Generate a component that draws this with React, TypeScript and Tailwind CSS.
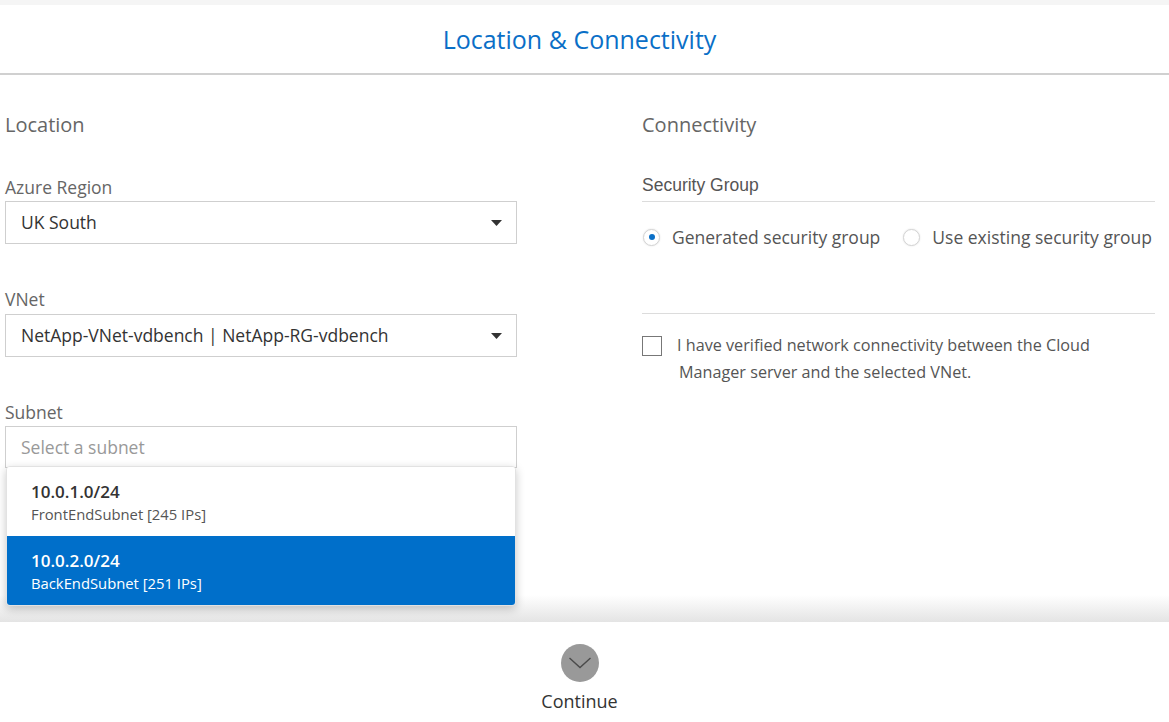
import React from 'react'

const SUBNETS = [
  { cidr: '10.0.1.0/24', name: 'FrontEndSubnet [245 IPs]', active: false },
  { cidr: '10.0.2.0/24', name: 'BackEndSubnet [251 IPs]', active: true },
]

function Caret() {
  return (
    <svg width="11" height="6" viewBox="0 0 11 6" className="shrink-0">
      <path d="M0 0 L11 0 L5.5 6 Z" fill="#333" />
    </svg>
  )
}

function SelectBox({ value }: { value: string }) {
  return (
    <div className="h-[43px] border border-[#cfcfcf] bg-white flex items-center justify-between pl-[15px] pr-[14px]">
      <span className="text-[17.5px] text-[#333]">{value}</span>
      <Caret />
    </div>
  )
}

function Radio({ checked, label }: { checked: boolean; label: string }) {
  return (
    <label className="flex items-center gap-[12px] whitespace-nowrap">
      <span className="w-[17px] h-[17px] rounded-full border border-[#d4d4d4] bg-white shadow-[0_0_2px_rgba(0,0,0,0.12)] flex items-center justify-center shrink-0">
        {checked && <span className="w-[6px] h-[6px] rounded-full bg-[#0a6fc7]" />}
      </span>
      <span className="text-[17.5px] text-[#555]">{label}</span>
    </label>
  )
}

export default function App() {
  return (
    <div className="w-[1169px] h-[722px] bg-white flex flex-col overflow-hidden" style={{ fontFamily: '"Open Sans", "Noto Sans", sans-serif' }}>
      {/* header */}
      <div className="h-[5px] bg-[#f5f5f5]" />
      <div className="h-[70px] flex items-center justify-center pr-[10px] border-b-2 border-[#d0d0d0]">
        <h1 className="text-[25px] text-[#0a6fc7] pt-[1px]">Location &amp; Connectivity</h1>
      </div>

      {/* body */}
      <div className="flex-1 relative flex flex-col">
        <div className="flex-1 flex pl-[5px] pt-[36px]">
          {/* LOCATION */}
          <div className="w-[512px]">
            <h2 className="text-[20px] leading-[28px] text-[#666]">Location</h2>

            <div className="text-[17.5px] leading-[24px] text-[#666] mt-[36px] mb-[2px]">Azure Region</div>
            <SelectBox value="UK South" />

            <div className="text-[17.5px] leading-[24px] text-[#666] mt-[43px] mb-[3px]">VNet</div>
            <SelectBox value="NetApp-VNet-vdbench | NetApp-RG-vdbench" />

            <div className="text-[17.5px] leading-[24px] text-[#666] mt-[43px] mb-[2px]">Subnet</div>
            <div className="relative">
              <div className="h-[42px] border border-[#cfcfcf] bg-white flex items-center pl-[15px]">
                <span className="text-[17.5px] text-[#999]">Select a subnet</span>
              </div>
              <div className="absolute z-10 left-[1px] right-[1px] top-[40px] bg-white rounded-[4px] overflow-hidden shadow-[0_3px_10px_rgba(0,0,0,0.22)] border border-[#e2e2e2]">
                {SUBNETS.map(s => (
                  <div key={s.cidr}
                    className={`h-[69px] pl-[24px] flex flex-col justify-center ${s.active ? 'bg-[#006fca] text-white' : 'bg-white'}`}>
                    <div className={`text-[17px] leading-[24px] font-semibold ${s.active ? 'text-white' : 'text-[#333]'}`}>{s.cidr}</div>
                    <div className={`text-[14.8px] leading-[20px] ${s.active ? 'text-white' : 'text-[#555]'}`}>{s.name}</div>
                  </div>
                ))}
              </div>
            </div>
          </div>

          {/* CONNECTIVITY */}
          <div className="w-[513px] ml-[125px]">
            <h2 className="text-[20px] leading-[28px] text-[#666]">Connectivity</h2>

            <div className="mt-[34px] pb-[4px] border-b border-[#dcdcdc] text-[17.5px] leading-[24px] text-[#555]"
              style={{ fontFamily: '"Liberation Sans", Arial, sans-serif' }}>
              Security Group
            </div>

            <div className="mt-[23px] h-[24px] flex items-center gap-[23px] pl-[1px]">
              <Radio checked label="Generated security group" />
              <Radio checked={false} label="Use existing security group" />
            </div>

            <div className="mt-[64px] border-t border-[#dcdcdc]" />

            <div className="mt-[18px] flex items-start gap-[15px]">
              <span className="mt-[4px] w-[20px] h-[20px] border-[1.5px] border-[#777] bg-white shrink-0" />
              <p className="text-[16.2px] leading-[27px] text-[#555]">
                I have verified network connectivity between the Cloud<br />
                <span className="pl-[2px]">Manager server and the selected VNet.</span>
              </p>
            </div>
          </div>
        </div>
        <div className="h-[27px] bg-gradient-to-b from-white to-[#e4e4e4]" />
      </div>

      {/* footer */}
      <div className="h-[100px] bg-white flex flex-col items-center pt-[22px] pr-[10px]">
        <button className="w-[38px] h-[38px] rounded-full bg-[#999] flex items-center justify-center">
          <svg width="24" height="14" viewBox="0 0 24 14">
            <path d="M1.5 2 L12 11.5 L22.5 2" fill="none" stroke="#4a4a4a" strokeWidth="1.4" />
          </svg>
        </button>
        <span className="mt-[7px] text-[18px] leading-[24px] text-[#333]">Continue</span>
      </div>
    </div>
  )
}
